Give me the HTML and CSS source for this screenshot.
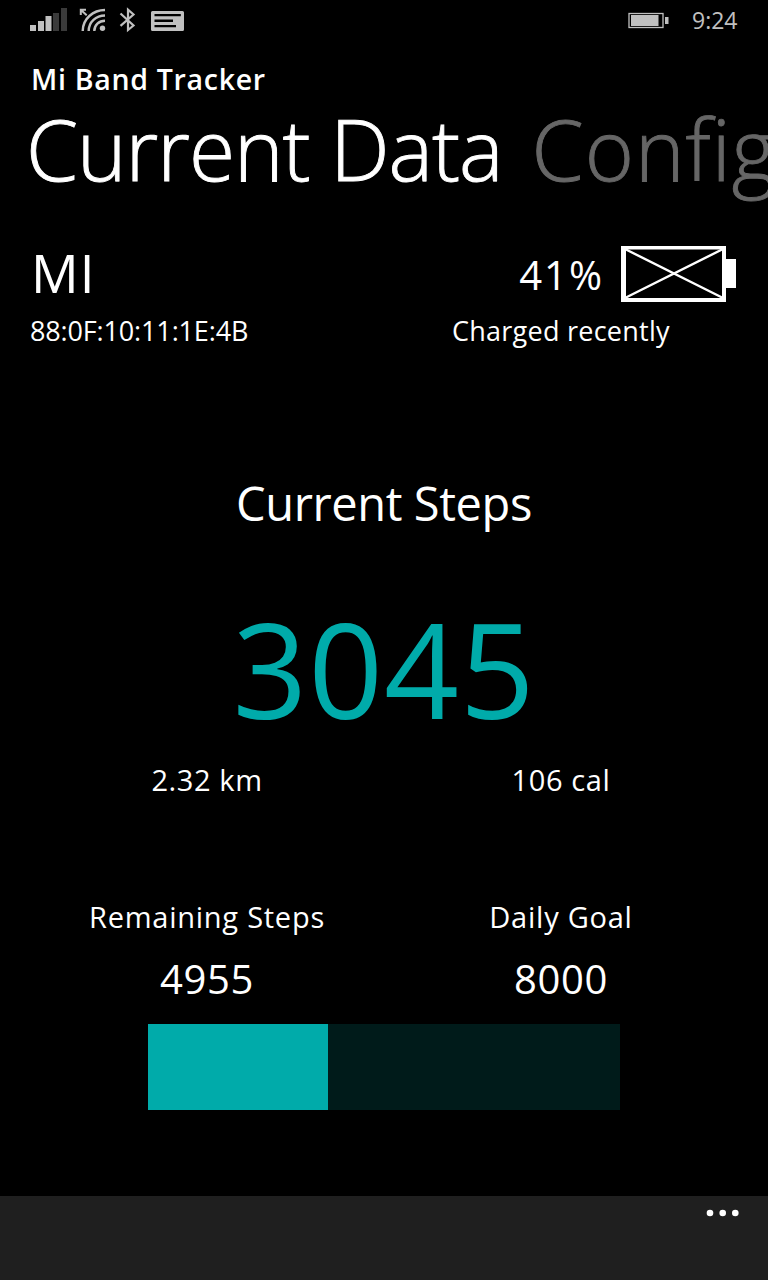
FILE: index.html
```html
<!DOCTYPE html>
<html lang="en">
<head>
<meta charset="utf-8">
<title>Mi Band Tracker</title>
<link rel="stylesheet" href="styles.css">
</head>
<body>
<div class="phone">
  <div class="status">
    <svg class="status-icons" width="160" height="40" viewBox="30 0 160 40">
      <g fill="#c0c0c0">
        <path d="M30 25h6v6h-6zM38 21h6v10h-6zM45.5 16h6v15h-6z"/>
        <path fill="#3a3a3a" d="M53 13h6v18h-6zM61 8h6v23h-6z"/>
        <circle cx="102.5" cy="28.3" r="2.7"/>
      </g>
      <g fill="none" stroke="#c0c0c0" stroke-width="2.400">
        <path d="M82.700 31C82.700 19 93 10 105 10M88.700 31C88.700 22 96 15.500 105 15.500M94.300 31C94.300 25 99 20.700 105 20.700"/>
        <path stroke-width="2" d="M80.800 15V9.800H86M81 10L86.700 15.200"/>
        <path stroke-width="2.200" d="M120.500 13.500L133.500 25.500L128 30V9.700L133.500 14.500L120.500 25.800"/>
      </g>
      <path fill="#c0c0c0" fill-rule="evenodd" d="M152.500 11H182.500Q184 11 184 12.500V29.500Q184 31 182.500 31H152.500Q151 31 151 29.500V12.500Q151 11 152.500 11ZM154.500 14V16.200H180.800V14ZM154.500 19.500V22H173V19.500ZM154.500 25V27.300H176V25Z"/>
    </svg>
    <div class="status-right">
      <svg width="42" height="40" viewBox="628 0 42 40">
        <rect x="629" y="13.500" width="34" height="14" fill="none" stroke="#c0c0c0" stroke-width="1.300"/>
        <path fill="#c0c0c0" d="M631 15h27.500v11H631zM665 17h3.500v7H665z"/>
      </svg>
      <span class="clock">9:24</span>
    </div>
  </div>
  <header>
    <div class="app-title">Mi Band Tracker</div>
    <nav class="pivot"><span>Current Data</span><span class="next">Config</span></nav>
  </header>
  <section class="device">
    <div class="device-top">
      <span class="name">MI</span>
      <div class="charge">
        <span class="percent">41%</span>
        <svg width="116" height="56" viewBox="0 0 116 56">
          <path fill="#fff" fill-rule="evenodd" d="M0 0H105V56H0ZM5 3.500V52H101V3.500ZM105 13H115V42H105Z"/>
          <path stroke="#fff" stroke-width="2.400" d="M4 3L102 52M4 52L102 3"/>
        </svg>
      </div>
    </div>
    <div class="device-sub">
      <span class="mac">88:0F:10:11:1E:4B</span>
      <span class="charged">Charged recently</span>
    </div>
  </section>
  <main>
    <h1>Current Steps</h1>
    <div class="steps">3045</div>
    <div class="pair"><span class="km">2.32 km</span><span class="cal">106 cal</span></div>
    <div class="pair goals">
      <div><div class="label">Remaining Steps</div><div class="value">4955</div></div>
      <div><div class="label">Daily Goal</div><div class="value">8000</div></div>
    </div>
    <div class="progress"><div class="fill"></div></div>
  </main>
  <footer>
    <svg width="34" height="10" viewBox="0 0 34 10" fill="#fff"><circle cx="4" cy="5" r="3.300"/><circle cx="16.700" cy="5" r="3.300"/><circle cx="29.300" cy="5" r="3.300"/></svg>
  </footer>
</div>
</body>
</html>
```
FILE: styles.css
```css
* { box-sizing: border-box; }
body { margin: 0; background: #000; }
.phone {
  display: flex; flex-direction: column;
  width: 768px; height: 1280px; overflow: hidden;
  background: #000; color: #fff;
  font-family: "Open Sans", "Noto Sans", sans-serif; white-space: nowrap;
}
svg { display: block; flex: none; }
.status { height: 40px; display: flex; justify-content: space-between; padding: 0 30px; color: #c0c0c0; }
.status-right { display: flex; gap: 22px; }
.clock { width: 46px; font-size: 23px; line-height: 40px; }
header { padding: 20px 0 0 28px; }
.app-title { padding-left: 3px; font-size: 28.5px; font-weight: 600; line-height: 39px; letter-spacing: 0.7px; }
.pivot { display: flex; gap: 29px; margin-left: -2px; font-size: 84px; font-weight: 300; line-height: 100px; letter-spacing: -1.05px; -webkit-text-stroke: 0.9px currentColor; }
.next { color: #666; letter-spacing: 1px; }
.device { padding: 34px 31px 0; }
.device-top { display: flex; justify-content: space-between; height: 80px; }
.name { font-size: 53px; line-height: 80px; letter-spacing: 1px; }
.charge { display: flex; gap: 17px; padding-top: 2px; }
.charge svg { margin-top: 11px; }
.percent { font-size: 40px; line-height: 80px; letter-spacing: 2px; }
.device-sub { display: grid; grid-template-columns: 421px 1fr; font-size: 27px; line-height: 36px; letter-spacing: 0.25px; }
.mac { margin-left: -1px; letter-spacing: -0.15px; }
main { display: flex; flex-direction: column; padding: 122px 30px 0; text-align: center; }
h1 { margin: 0; font-size: 47px; font-weight: 400; line-height: 64px; letter-spacing: -0.4px; }
.steps { margin-top: 53px; color: #00abaa; font-size: 131px; line-height: 160px; letter-spacing: 0.8px; }
.pair { display: grid; grid-template-columns: 1fr 1fr; margin-top: 12px; font-size: 29px; line-height: 40px; letter-spacing: 0.6px; }
.goals { margin-top: 97px; }
.label { letter-spacing: 0.75px; }
.value { margin-top: 14px; font-size: 40px; line-height: 56px; letter-spacing: 0.6px; }
.progress { width: 472px; height: 86px; margin: 17px auto 0; background: #001b1a; }
.fill { width: 180px; height: 100%; background: #00abaa; }
footer { display: flex; justify-content: flex-end; height: 84px; margin-top: auto; padding: 12px 28px 0 0; background: #1f1f1f; }
```
